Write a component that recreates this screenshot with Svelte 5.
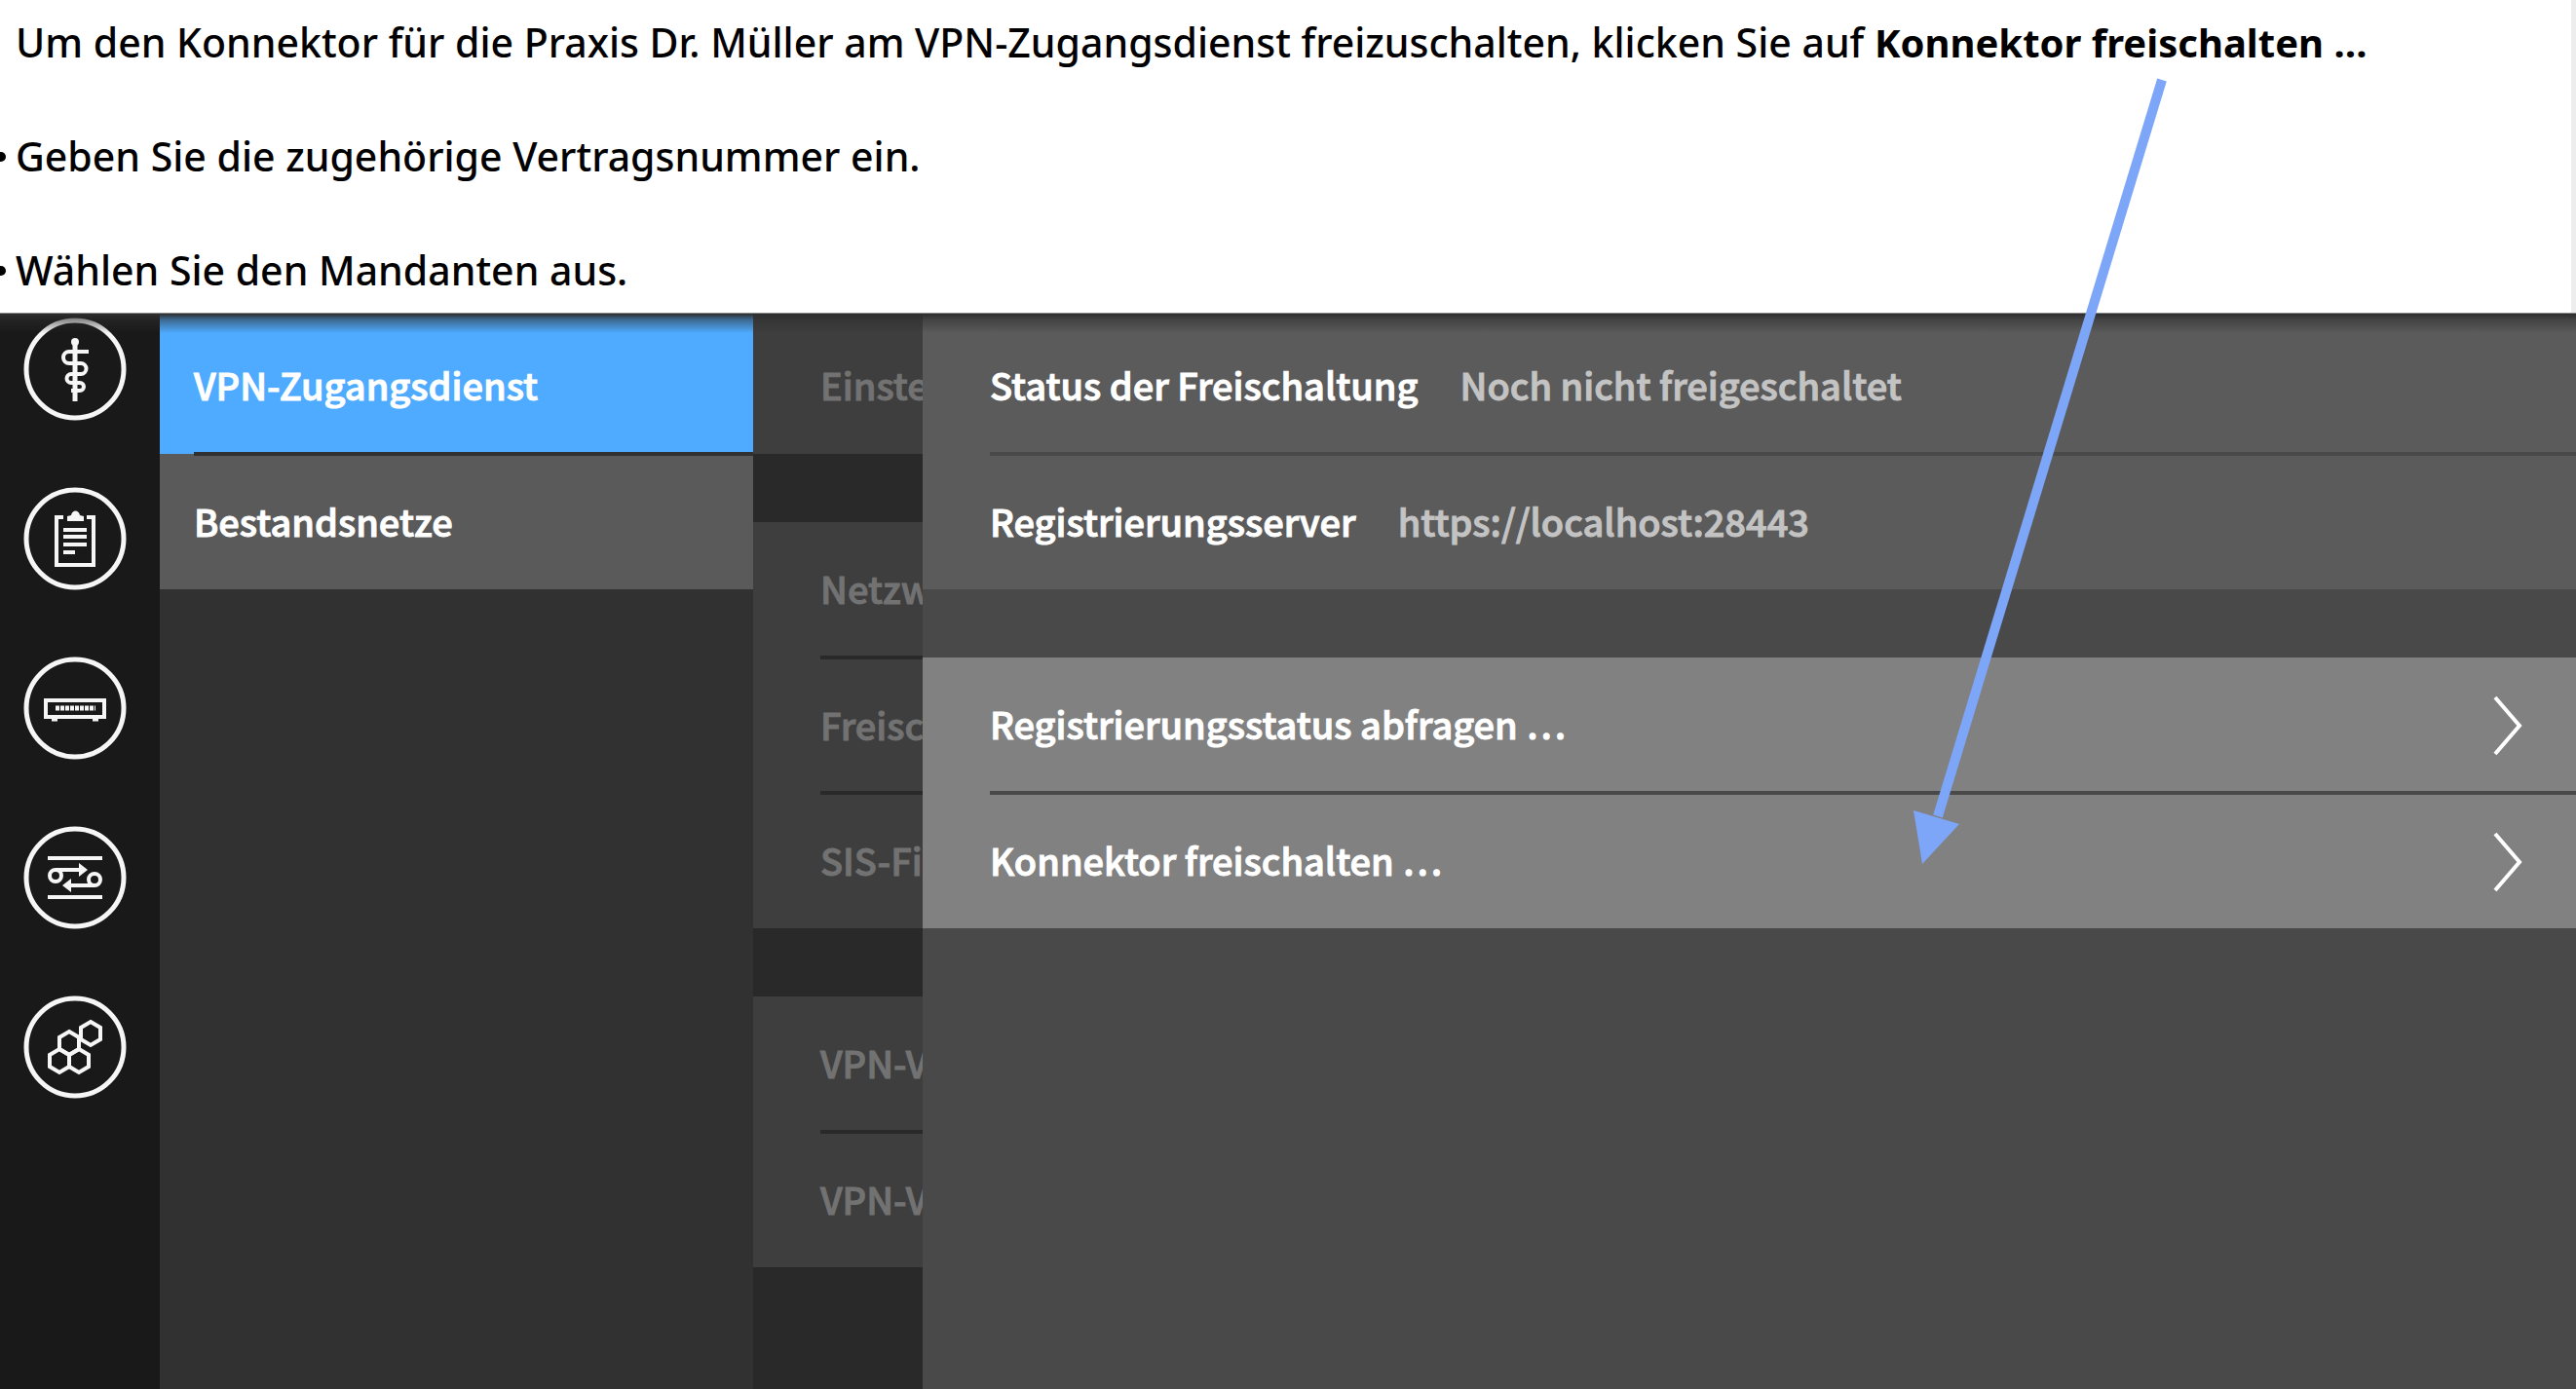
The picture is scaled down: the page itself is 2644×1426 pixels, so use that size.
<script>
  const railItems = ['Praxis', 'Protokoll', 'System', 'Netzwerk', 'Module'];
  const menu = ['VPN-Zugangsdienst', 'Bestandsnetze'];
  const settings = [['Einste'], ['Netzw', 'Freisc', 'SIS-Fi'], ['VPN-V', 'VPN-V']];
  const status = [
    { label: 'Status der Freischaltung', value: 'Noch nicht freigeschaltet' },
    { label: 'Registrierungsserver', value: 'https://localhost:28443' },
  ];
  const actions = ['Registrierungsstatus abfragen …', 'Konnektor freischalten …'];
  const hexes = [[16, -14], [-6, -4], [-16, 14], [4, 14]];
</script>

<div class="page">
  <section class="guide">
    <p>
      Um den Konnektor für die Praxis Dr. Müller am VPN-Zugangsdienst freizuschalten, klicken Sie auf
      <strong>Konnektor freischalten …</strong>
    </p>
    <ul>
      <li>Geben Sie die zugehörige Vertragsnummer ein.</li>
      <li>Wählen Sie den Mandanten aus.</li>
    </ul>
  </section>

  <main class="app">
    <nav class="rail">
      {#each railItems as name, i}
        <button aria-label={name}>
          <svg viewBox="-52 -52 104 104" fill="none" stroke="#f6f6f6" stroke-width="4">
            <circle r="50" stroke-width="5" />
            {#if i === 0}
              <circle cy="-28" r="4" fill="#f6f6f6" stroke="none" />
              <path d="M0-30V33" stroke-width="5" />
              <path d="M14-18H-6a6 6 0 0 0 0 12H6a5 5 0 0 1 0 11H-4a4 4 0 0 0 0 9H5a4 4 0 0 1 0 8H-4" />
            {:else if i === 1}
              <path d="M-12-22H-19V27H19V-22H12M-12-9H12M-12-2H12M-12 6H12M-12 14H0" />
              <path d="M-8-18v-5l4-1c1-6 8-6 9 0l4 1v5z" fill="#f6f6f6" stroke="none" />
            {:else if i === 2}
              <rect x="-30" y="-8" width="60" height="17" />
              <path d="M-20 0H21" stroke-width="5" stroke-dasharray="4 1" />
              <path d="M-24 12h6M18 12h6" stroke-width="3" />
            {:else if i === 3}
              <path d="M-28-20H28M-28 20H28M-20-8H6M20 8H-5" />
              <circle cx="-20" cy="-2" r="6" />
              <circle cx="20" cy="2" r="6" />
              <path d="M4-15 13-8 4-1zM-4 1-13 8-4 15z" fill="#f6f6f6" stroke="none" />
            {:else}
              {#each hexes as [x, y]}
                <path transform="translate({x} {y})" d="M0-12 10-6V6L0 12-10 6V-6z" />
              {/each}
            {/if}
          </svg>
        </button>
      {/each}
    </nav>

    <nav class="menu">
      <ul class="group">
        {#each menu as item, i}
          <li class:active={i === 0}><a href="#top"><span>{item}</span></a></li>
        {/each}
      </ul>
    </nav>

    <div class="settings">
      {#each settings as group}
        <ul class="group">
          {#each group as item}
            <li><span>{item}</span></li>
          {/each}
        </ul>
      {/each}
    </div>

    <section class="panel">
      <ul class="group">
        {#each status as row}
          <li><span>{row.label}</span><span class="value">{row.value}</span></li>
        {/each}
      </ul>
      <ul class="group actions">
        {#each actions as action}
          <li>
            <button>
              <span>{action}</span>
              <svg class="chevron" viewBox="0 0 32 64" fill="none" stroke="#fff" stroke-width="4">
                <path d="M3 3 28 32 3 61" />
              </svg>
            </button>
          </li>
        {/each}
      </ul>
    </section>
  </main>

  <svg class="pointer" viewBox="0 0 270 808" aria-hidden="true">
    <path d="M259 2 29 758" stroke="#7da6f8" stroke-width="10" />
    <path d="M4 752 51 766 13 807z" fill="#7da6f8" />
  </svg>
</div>

<style>
  :global(body) {
    margin: 0;
    background: #494949;
  }
  .page {
    position: relative;
    display: flex;
    flex-direction: column;
    min-height: 100vh;
    overflow: hidden;
  }
  ul {
    list-style: none;
    margin: 0;
    padding: 0;
  }
  .guide {
    padding: 14px 16px 15px;
    border-right: 5px solid #ededed;
    background: #fff;
    color: #000;
    font: 500 41px/58px 'Noto Sans', sans-serif;
    white-space: nowrap;
  }
  .guide p {
    margin: 0;
  }
  .guide strong {
    font-size: 40px;
    line-height: 1;
  }
  .guide li {
    position: relative;
    margin-top: 59px;
  }
  .guide li::before {
    content: '';
    position: absolute;
    left: -20px;
    top: 25px;
    width: 10px;
    height: 10px;
    border-radius: 50%;
    background: #000;
  }
  .app {
    position: relative;
    flex: 1;
    display: grid;
    grid-template-columns: 164px 609px 174px 1fr;
    font: 500 38px/56px 'Noto Sans CJK SC', sans-serif;
    color: #fff;
    -webkit-text-stroke: 1px currentColor;
  }
  .app::before {
    content: '';
    position: absolute;
    inset: 0 0 auto;
    height: 20px;
    border-top: 1px solid #8a8a8a;
    background: linear-gradient(#2d2d2d, #2d2d2d88 30%, #2d2d2d00);
    z-index: 1;
  }
  button {
    padding: 0;
    border: 0;
    background: none;
    color: inherit;
    font: inherit;
    text-align: left;
  }
  .rail {
    display: flex;
    flex-direction: column;
    gap: 70px;
    padding: 6px 25px;
    background: #191919;
  }
  .rail button,
  .rail svg {
    display: block;
    width: 104px;
    height: 104px;
  }
  .rail svg {
    overflow: visible;
  }
  .menu,
  .settings,
  .panel {
    display: flex;
    flex-direction: column;
    gap: 70px;
    padding-top: 6px;
    overflow: hidden;
    white-space: nowrap;
  }
  .menu {
    --line: #313131;
    --row: #5a5a5a;
    background: #313131;
  }
  .settings {
    --line: #292929;
    --row: #3e3e3e;
    background: #292929;
    color: #727272;
  }
  .panel {
    --line: #494949;
    --row: #5b5b5b;
    background: #494949;
  }
  .actions {
    --row: #818181;
  }
  .group {
    background: var(--row);
  }
  .group:first-child {
    box-shadow: 0 -6px var(--row);
  }
  .menu .group:first-child {
    box-shadow: 0 -6px #4eabff;
  }
  .group li {
    box-sizing: border-box;
    display: flex;
    align-items: center;
    gap: 43px;
    height: 139px;
    margin-left: 69px;
  }
  .menu .group li {
    margin-left: 35px;
  }
  .group li + li {
    height: 141px;
    margin-top: -2px;
    border-top: 4px solid var(--line);
  }
  .menu .group li.active {
    margin-left: 0;
    padding-left: 35px;
    background: #4eabff;
  }
  .group span {
    display: block;
    padding-bottom: 4px;
  }
  a {
    color: inherit;
    text-decoration: none;
  }
  .value {
    color: #c3c3c3;
  }
  .actions button {
    flex: 1;
    display: flex;
    align-items: center;
    justify-content: space-between;
    padding-right: 54px;
  }
  .chevron {
    width: 32px;
    height: 64px;
  }
  .pointer {
    position: absolute;
    left: 1960px;
    top: 80px;
    width: 270px;
    height: 808px;
    z-index: 2;
    pointer-events: none;
  }
</style>
